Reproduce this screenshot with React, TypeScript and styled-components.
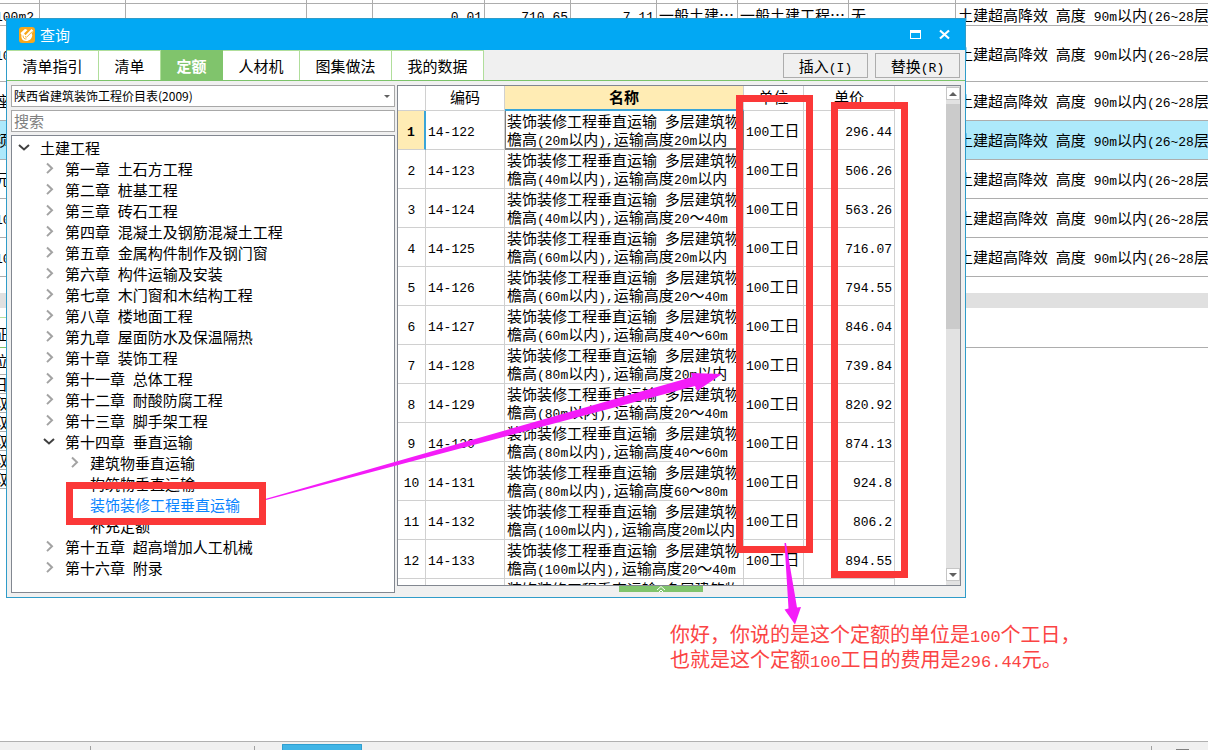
import React from 'react';
import styled, { createGlobalStyle, css } from 'styled-components';

const CJK = '"Noto Sans CJK SC", sans-serif';
const MONO = '"Liberation Mono", "Noto Sans CJK SC", monospace';

const GlobalStyle = createGlobalStyle`
  *, *::before, *::after { box-sizing: border-box; }
  body {
    margin: 0;
    background: #fff;
    color: #000;
    font-family: ${CJK};
    font-size: 15px;
    overflow: hidden;
  }
  button, input, select { font: inherit; color: inherit; margin: 0; }
`;

/* Half-width characters are set in a narrower monospace than the Chinese text;
   the zero line height keeps them from stretching the line they stand in. */
const Latin = styled.span<{ $size?: number }>`
  font-family: ${MONO};
  font-size: ${(p) => p.$size ?? 13}px;
  line-height: 0;
`;

function Mixed({ text, size }: { text: string; size?: number }) {
  return (
    <>
      {text.split(/([\x20-\x7e]+)/).map((part, i) =>
        i % 2 ? <Latin key={i} $size={size}>{part}</Latin> : part,
      )}
    </>
  );
}

const Page = styled.main`
  position: relative;
  display: flex;
  flex-direction: column;
  height: 100vh;
  overflow: hidden;
`;

/* ---------- main window behind the dialog ---------- */

const BackTable = styled.table`
  flex: none;
  table-layout: fixed;
  width: calc(100% + 9px);
  margin-left: -9px;
  border-collapse: separate;
  border-spacing: 0;
`;

const BackRow = styled.tr<{ $height: number; $active?: boolean }>`
  height: ${(p) => p.$height}px;
  background: ${(p) => (p.$active ? '#ade9fb' : '#fff')};
`;

const BackCell = styled.td<{ $right?: boolean }>`
  padding: 0 2px;
  border-right: 1px solid #adadad;
  border-bottom: 1px solid #adadad;
  line-height: 20px;
  white-space: nowrap;
  overflow: hidden;
  text-align: ${(p) => (p.$right ? 'right' : 'left')};
  &:last-child { border-right: 0; }
`;

const FirstCell = styled(BackCell)`
  padding-left: 4px;
`;

const LowerCell = styled(BackCell)`
  line-height: 18px;
`;

const BackScroll = styled.div`
  flex: none;
  height: 15px;
  margin-top: 16px;
  background: #e0e0e0;
`;

const LowerTabs = styled.div`
  flex: none;
  display: flex;
  height: 31px;
  margin-top: 9px;
  border-bottom: 1px solid #adadad;
`;

const LowerTab = styled.div`
  height: 31px;
  margin-left: -9px;
  padding: 0 2px;
  width: 90px;
  border-top: 1px solid #b5e09f;
  border-bottom: 1px solid #7cc36a;
  line-height: 32px;
`;

const LowerTable = styled.table`
  width: 90px;
  margin-left: -9px;
  border-collapse: separate;
  border-spacing: 0;
`;

const StatusBar = styled.footer`
  flex: none;
  display: flex;
  align-items: flex-start;
  height: 9px;
  margin-top: auto;
  background: #f0f0f0;
  border-top: 1px solid #b0b0b0;
`;

const StatusGap = styled.span<{ $width?: number }>`
  ${(p) => (p.$width ? css`width: ${p.$width}px;` : css`flex: 1;`)}
`;

const StatusRule = styled.span`
  width: 1px;
  height: 4px;
  margin-top: 4px;
  background: #a0a0a0;
`;

const StatusTab = styled.span`
  width: 80px;
  height: 6px;
  margin-top: 2px;
  border: 1px solid #2f9fd0;
  border-bottom: 0;
  border-radius: 1px 1px 0 0;
  background: #41b5e6;
`;

const StatusMark = styled.span`
  width: 13px;
  height: 1px;
  margin: 7px 19px 0 0;
  background: #808080;
`;

/* ---------- dialog ---------- */

const Dialog = styled.section`
  position: absolute;
  left: 6px;
  top: 18px;
  width: calc(100% - 248px);
  height: calc(100vh - 170px);
  display: flex;
  flex-direction: column;
  border: 1px solid #2f9cc9;
  background: #f0f0f0;
`;

const TitleBar = styled.header`
  flex: none;
  display: flex;
  align-items: center;
  height: 31px;
  padding: 0 14px 0 12px;
  background: #02a8f3;
  color: #fff;
`;

const Title = styled.h1`
  flex: 1;
  margin: 0 0 0 5px;
  font-size: 15px;
  font-weight: 400;
  line-height: 20px;
`;

const WindowButton = styled.button`
  display: flex;
  width: 13px;
  height: 13px;
  margin-left: 16px;
  padding: 0;
  border: 0;
  background: none;
`;

const TabBar = styled.div`
  flex: none;
  display: flex;
  height: 31px;
  border-bottom: 1px solid #7cc36a;
`;

const Tab = styled.button<{ $width: number; $active?: boolean }>`
  width: ${(p) => p.$width}px;
  padding: 0;
  border: 0;
  border-top: 1px solid #b0de9b;
  border-right: 1px solid #b0de9b;
  background: #fff;
  text-align: center;
  white-space: nowrap;
  ${(p) =>
    p.$active &&
    css`
      border-color: #80c46c;
      background: #80c46c;
      color: #fff;
      font-weight: 700;
    `}
`;

const Actions = styled.div`
  display: flex;
  gap: 7px;
  margin: 3px 5px 0 auto;
`;

const ActionButton = styled.button`
  width: 85px;
  height: 25px;
  padding: 0;
  border: 1px solid #adadad;
  background: #f0f0f0;
  line-height: 20px;
`;

const Body = styled.div`
  flex: 1;
  min-height: 0;
  display: flex;
  gap: 2px;
  padding: 4px 4px 0;
`;

const Sidebar = styled.div`
  flex: none;
  display: flex;
  flex-direction: column;
  gap: 3px;
  width: 384px;
  padding-bottom: 4px;
`;

const SelectBox = styled.div`
  position: relative;
  display: flex;
  flex: none;
`;

const Select = styled.select`
  appearance: none;
  width: 100%;
  height: 22px;
  padding: 0 16px 2px 2px;
  border: 1px solid #a8a8a8;
  border-radius: 0;
  background: #fff;
  font-size: 12px;
`;

const SelectArrow = styled.svg`
  position: absolute;
  right: 5px;
  top: 10px;
  pointer-events: none;
`;

const SearchInput = styled.input`
  flex: none;
  width: 100%;
  height: 22px;
  padding: 0 2px 2px;
  border: 1px solid #a8a8a8;
  background: #fff;
  &::placeholder { color: #808080; opacity: 1; }
`;

const Tree = styled.ul`
  flex: 1;
  min-height: 0;
  margin: 0;
  padding: 1px 0 0;
  border: 1px solid #828790;
  background: #fff;
  list-style: none;
  overflow: hidden;
`;

const TreeItem = styled.button<{ $level: number; $selected?: boolean }>`
  display: flex;
  align-items: center;
  width: 100%;
  height: 21px;
  padding: 0 0 0 ${(p) => 5 + p.$level * 25}px;
  border: 0;
  background: none;
  line-height: 21px;
  white-space: nowrap;
  text-align: left;
  color: ${(p) => (p.$selected ? '#0a84ff' : '#000')};
`;

const TreeIcon = styled.span`
  flex: none;
  display: flex;
  width: 23px;
  height: 16px;
`;

const Panel = styled.div`
  flex: 1;
  min-width: 0;
  display: flex;
  flex-direction: column;
`;

const GridFrame = styled.div`
  flex: 1;
  min-height: 0;
  display: flex;
  justify-content: space-between;
  border: 1px solid #828790;
  background: #fff;
  overflow: hidden;
`;

const Grid = styled.table`
  align-self: flex-start;
  table-layout: fixed;
  width: 497px;
  border-collapse: separate;
  border-spacing: 0;
`;

const HeadCell = styled.th<{ $active?: boolean }>`
  height: 25px;
  padding: 0 0 2px;
  border-right: 1px solid #d0d0d0;
  border-bottom: 1px solid #d0d0d0;
  font-weight: 400;
  line-height: 20px;
  ${(p) =>
    p.$active &&
    css`
      border-bottom: 2px solid #3aa5d8;
      background: #ffecb4;
      font-weight: 700;
    `}
`;

const Cell = styled.td<{ $right?: boolean; $focus?: boolean }>`
  height: 39px;
  padding: 0 2px;
  border-right: 1px solid #d0d0d0;
  border-bottom: 1px solid #d0d0d0;
  line-height: 18px;
  white-space: nowrap;
  overflow: hidden;
  text-align: ${(p) => (p.$right ? 'right' : 'left')};
  ${(p) =>
    p.$focus &&
    css`
      box-shadow: inset 1px 0 #808080, inset 0 -1px #808080;
      border-color: #808080;
    `}
`;

const IndexCell = styled.th<{ $active?: boolean }>`
  height: 39px;
  padding: 0;
  border-right: 1px solid #d0d0d0;
  border-bottom: 1px solid #d0d0d0;
  font-weight: 400;
  line-height: 18px;
  text-align: center;
  ${(p) =>
    p.$active &&
    css`
      border-right: 2px solid #3aa5d8;
      background: #ffecb4;
      font-weight: 700;
    `}
`;

const ScrollTrack = styled.div`
  display: flex;
  flex-direction: column;
  width: 14px;
  padding: 1px 0 4px;
  background: #e2e2e2;
`;

const ScrollButton = styled.button`
  flex: none;
  display: flex;
  align-items: center;
  justify-content: center;
  width: 14px;
  height: 13px;
  padding: 0;
  border: 1px solid #c6c6c6;
  background: #fff;
`;

const ScrollThumb = styled.div`
  height: 225px;
  margin: 4px 0 auto;
  background: #cbcbcb;
`;

const PanelFoot = styled.div`
  flex: none;
  height: 11px;
  padding-left: 222px;
`;

const Collapse = styled.button`
  display: flex;
  justify-content: center;
  width: 84px;
  height: 6px;
  padding: 0;
  border: 0;
  background: #80c46c;
`;

/* ---------- mark-up drawn over the window ---------- */

const Mark = styled.div<{ $x: number; $y: number; $w: number; $h: number }>`
  position: absolute;
  left: ${(p) => p.$x}px;
  top: ${(p) => p.$y}px;
  width: ${(p) => p.$w}px;
  height: ${(p) => p.$h}px;
  border: 7px solid #fb3838;
  pointer-events: none;
`;

const Arrows = styled.svg`
  position: absolute;
  left: 0;
  top: 0;
  pointer-events: none;
`;

const Note = styled.p`
  position: absolute;
  left: 670px;
  top: 621px;
  margin: 0;
  color: #fb4444;
  font-size: 20px;
  line-height: 25px;
  white-space: nowrap;
`;

const backColumns = [49, 86, 181, 66, 112, 86, 86, 81, 111, 107];
const longText = '土建超高降效 高度 90m以内(26~28层)';

const backRows: { unit: string; height: number; active?: boolean; cells?: string[] }[] = [
  { unit: '100m2', height: 22, cells: ['', '', '', '0.01', '710.65', '7.11', '一般土建…', '一般土建工程…', '无'] },
  { unit: '100m2', height: 56 },
  { unit: '座', height: 39 },
  { unit: '项', height: 39, active: true },
  { unit: '元', height: 39 },
  { unit: '100m2', height: 39 },
  { unit: '100m2', height: 39 },
];

const lowerRows: [string, number][] = [
  ['位', 27], ['日', 19], ['取', 19], ['取', 19], ['取', 19], ['取', 19], ['取', 19],
];

const tabs: [string, number][] = [
  ['清单指引', 92], ['清单', 62], ['定额', 62], ['人材机', 77], ['图集做法', 92], ['我的数据', 92],
];

type Node = { text: string; level: number; state?: 'open' | 'closed'; selected?: boolean };

const chapter = (text: string): Node => ({ text, level: 1, state: 'closed' });

const tree: Node[] = [
  { text: '土建工程', level: 0, state: 'open' },
  chapter('第一章 土石方工程'),
  chapter('第二章 桩基工程'),
  chapter('第三章 砖石工程'),
  chapter('第四章 混凝土及钢筋混凝土工程'),
  chapter('第五章 金属构件制作及钢门窗'),
  chapter('第六章 构件运输及安装'),
  chapter('第七章 木门窗和木结构工程'),
  chapter('第八章 楼地面工程'),
  chapter('第九章 屋面防水及保温隔热'),
  chapter('第十章 装饰工程'),
  chapter('第十一章 总体工程'),
  chapter('第十二章 耐酸防腐工程'),
  chapter('第十三章 脚手架工程'),
  { text: '第十四章 垂直运输', level: 1, state: 'open' },
  { text: '建筑物垂直运输', level: 2, state: 'closed' },
  { text: '构筑物垂直运输', level: 2 },
  { text: '装饰装修工程垂直运输', level: 2, selected: true },
  { text: '补充定额', level: 2 },
  chapter('第十五章 超高增加人工机械'),
  chapter('第十六章 附录'),
];

const items: [string, string, string, string][] = [
  ['14-122', '20', '20m以内', '296.44'],
  ['14-123', '40', '20m以内', '506.26'],
  ['14-124', '40', '20～40m', '563.26'],
  ['14-125', '60', '20m以内', '716.07'],
  ['14-126', '60', '20～40m', '794.55'],
  ['14-127', '60', '40～60m', '846.04'],
  ['14-128', '80', '20m以内', '739.84'],
  ['14-129', '80', '20～40m', '820.92'],
  ['14-130', '80', '40～60m', '874.13'],
  ['14-131', '80', '60～80m', '924.8'],
  ['14-132', '100', '20m以内', '806.2'],
  ['14-133', '100', '20～40m', '894.55'],
];

function Chevron({ state }: { state: 'open' | 'closed' }) {
  return state === 'open' ? (
    <svg width="14" height="16" viewBox="0 0 14 16" fill="none" stroke="#404040" strokeWidth="2">
      <path d="M2 5l5 4.5L12 5" />
    </svg>
  ) : (
    <svg width="14" height="16" viewBox="0 0 14 16" fill="none" stroke="#a3a3a3" strokeWidth="2">
      <path d="M5 2.5l5 4.8-5 4.8" />
    </svg>
  );
}

function AppIcon() {
  return (
    <svg width="16" height="16" viewBox="0 0 16 16">
      <rect width="16" height="16" rx="3" fill="#f8a71b" />
      <path d="M1.5 6L6 2l2.5 1L5 6.5l1.5 1.8L12.500 2l2 2-2 2.500.8 1.500c-.3 3.700-2.800 6-6.300 6C3.500 14 1.800 11 2.500 8z" fill="#fff" />
      <path d="M6 9.500l1.500.8 6-6M4 8.500c0 2.500 1.500 3.800 3.500 3.500" fill="none" stroke="#f8a71b" strokeWidth=".9" />
    </svg>
  );
}

function BackWindow() {
  return (
    <>
      <BackTable>
        <colgroup>
          {backColumns.map((w, i) => <col key={i} style={{ width: w }} />)}
          <col />
        </colgroup>
        <tbody>
          <BackRow $height={4}>
            {Array.from({ length: 11 }, (_, i) => <BackCell key={i} />)}
          </BackRow>
          {backRows.map((row, i) => (
            <BackRow key={i} $height={row.height} $active={row.active}>
              <FirstCell><Mixed text={row.unit} /></FirstCell>
              {row.cells
                ? row.cells.map((c, k) => (
                    <BackCell key={k} $right={k < 6}><Mixed text={c} /></BackCell>
                  ))
                : <BackCell colSpan={9} />}
              <BackCell><Mixed text={longText} /></BackCell>
            </BackRow>
          ))}
        </tbody>
      </BackTable>
      <BackScroll />
      <LowerTabs><LowerTab>征</LowerTab></LowerTabs>
      <LowerTable>
        <tbody>
          {lowerRows.map(([text, height], i) => (
            <BackRow key={i} $height={height}>
              <LowerCell>{text}</LowerCell>
            </BackRow>
          ))}
        </tbody>
      </LowerTable>
      <StatusBar>
        <StatusGap $width={90} />
        <StatusRule />
        <StatusGap $width={163} />
        <StatusRule />
        <StatusGap $width={27} />
        <StatusTab />
        <StatusGap />
        <StatusRule />
        <StatusGap $width={24} />
        <StatusMark />
      </StatusBar>
    </>
  );
}

function ItemGrid() {
  return (
    <Grid>
      <colgroup>
        <col style={{ width: 28 }} />
        <col style={{ width: 79 }} />
        <col style={{ width: 239 }} />
        <col style={{ width: 60 }} />
        <col style={{ width: 91 }} />
      </colgroup>
      <thead>
        <tr>
          <HeadCell />
          <HeadCell>编码</HeadCell>
          <HeadCell $active>名称</HeadCell>
          <HeadCell>单位</HeadCell>
          <HeadCell>单价</HeadCell>
        </tr>
      </thead>
      <tbody>
        {items.map(([code, eaves, lift, price], i) => (
          <tr key={code}>
            <IndexCell $active={i === 0}><Latin>{i + 1}</Latin></IndexCell>
            <Cell><Latin>{code}</Latin></Cell>
            <Cell $focus={i === 0}>
              <Mixed text="装饰装修工程垂直运输 多层建筑物" />
              <br />
              <Mixed text={`檐高(${eaves}m以内),运输高度${lift}`} />
            </Cell>
            <Cell><Mixed text="100工日" /></Cell>
            <Cell $right><Latin>{price}</Latin></Cell>
          </tr>
        ))}
        <tr>
          <IndexCell />
          <Cell />
          <Cell>
            <Mixed text="装饰装修工程垂直运输 多层建筑物" />
            <br />
            <Mixed text="檐高(100m以内),运输高度40～60m" />
          </Cell>
          <Cell />
          <Cell />
        </tr>
      </tbody>
    </Grid>
  );
}

export default function App() {
  return (
    <Page>
      <GlobalStyle />
      <BackWindow />
      <Dialog role="dialog" aria-label="查询">
        <TitleBar>
          <AppIcon />
          <Title>查询</Title>
          <WindowButton aria-label="最大化">
            <svg width="13" height="13" viewBox="0 0 13 13">
              <path d="M1 2h11v9H1z M2 5v5h9V5z" fill="#fff" fillRule="evenodd" />
            </svg>
          </WindowButton>
          <WindowButton aria-label="关闭">
            <svg width="13" height="13" viewBox="0 0 13 13" stroke="#fff" strokeWidth="2.2">
              <path d="M2 2.500l9 8M11 2.500l-9 8" />
            </svg>
          </WindowButton>
        </TitleBar>
        <TabBar>
          {tabs.map(([name, width]) => (
            <Tab key={name} $width={width} $active={name === '定额'}>{name}</Tab>
          ))}
          <Actions>
            <ActionButton><Mixed text="插入(I)" /></ActionButton>
            <ActionButton><Mixed text="替换(R)" /></ActionButton>
          </Actions>
        </TabBar>
        <Body>
          <Sidebar>
            <SelectBox>
              <Select aria-label="定额库">
                <option>陕西省建筑装饰工程价目表(2009)</option>
              </Select>
              <SelectArrow width="6" height="4" viewBox="0 0 6 4">
                <path d="M0 0h6L3 3z" fill="#606060" />
              </SelectArrow>
            </SelectBox>
            <SearchInput placeholder="搜索" aria-label="搜索" />
            <Tree>
              {tree.map((node) => (
                <li key={node.text}>
                  <TreeItem $level={node.level} $selected={node.selected}>
                    <TreeIcon>{node.state && <Chevron state={node.state} />}</TreeIcon>
                    <span><Mixed text={node.text} /></span>
                  </TreeItem>
                </li>
              ))}
            </Tree>
          </Sidebar>
          <Panel>
            <GridFrame>
              <ItemGrid />
              <ScrollTrack>
                <ScrollButton aria-label="向上滚动">
                  <svg width="8" height="4" viewBox="0 0 8 4"><path d="M0 4l4-4 4 4z" fill="#606060" /></svg>
                </ScrollButton>
                <ScrollThumb />
                <ScrollButton aria-label="向下滚动">
                  <svg width="8" height="4" viewBox="0 0 8 4"><path d="M0 0l4 4 4-4z" fill="#606060" /></svg>
                </ScrollButton>
              </ScrollTrack>
            </GridFrame>
            <PanelFoot>
              <Collapse aria-label="收起">
                <svg width="10" height="6" viewBox="0 0 10 6" fill="none" stroke="#fff">
                  <path d="M1 4l4-3.500L9 4M3 6l2-2 2 2" />
                </svg>
              </Collapse>
            </PanelFoot>
          </Panel>
        </Body>
      </Dialog>
      <Mark $x={66} $y={482} $w={200} $h={43} />
      <Mark $x={736} $y={95} $w={77} $h={458} />
      <Mark $x={831} $y={102} $w={77} $h={476} />
      <Arrows width="830" height="640" viewBox="0 0 830 640" fill="#f41cf8">
        <path d="M266 498.800L692 377l-1-4 31 1-25 17-2-5L400 464.500 266 500z" />
        <path d="M784.500 543l4 65.500-4 1 10.500 15 6-17.500-4 .5-11-64.500z" />
      </Arrows>
      <Note>
        <Mixed text="你好，你说的是这个定额的单位是100个工日，" size={17} />
        <br />
        <Mixed text="也就是这个定额100工日的费用是296.44元。" size={17} />
      </Note>
    </Page>
  );
}
